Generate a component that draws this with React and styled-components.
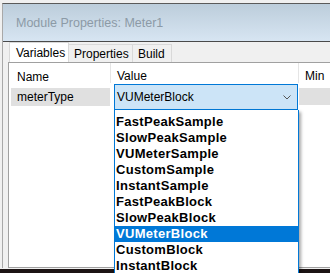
import React from "react";
import styled, { createGlobalStyle } from "styled-components";

const GlobalStyle = createGlobalStyle`
  html, body {
    margin: 0;
    padding: 0;
    background: #f0f0f0;
    overflow: hidden;
  }
  body {
    font-family: "Segoe UI", "Liberation Sans", Arial, sans-serif;
    font-size: 12px;
    color: #000;
  }
`;

const options = [
  "FastPeakSample",
  "SlowPeakSample",
  "VUMeterSample",
  "CustomSample",
  "InstantSample",
  "FastPeakBlock",
  "SlowPeakBlock",
  "VUMeterBlock",
  "CustomBlock",
  "InstantBlock",
];

const tabs = [
  { label: "Variables", width: 60, active: true },
  { label: "Properties", width: 65 },
  { label: "Build", width: 40 },
];

const Page = styled.div`
  height: 273px;
  display: flex;
  flex-direction: column;
`;

const Window = styled.div`
  flex: 1;
  margin: 3px 0 0 2px;
  border-top: 1px solid #5a5a5a;
  border-left: 1px solid #a8a8a8;
  display: flex;
  flex-direction: column;
  min-height: 0;
`;

const TitleBar = styled.div`
  height: 38px;
  flex-shrink: 0;
  box-sizing: border-box;
  display: flex;
  align-items: center;
  padding: 1px 0 0 13px;
  background: linear-gradient(#bccddb, #d7e5f2);
  border-bottom: 1px solid #4a4a4a;
  color: #8c9aa6;
  font-size: 12.5px;
`;

const Body = styled.div`
  flex: 1;
  display: flex;
  flex-direction: column;
  padding-left: 5px;
  background: #f0f0f0;
  min-height: 0;
`;

const TabStrip = styled.div`
  height: 20px;
  flex-shrink: 0;
  display: flex;
  align-items: flex-end;
  padding-left: 2px;
`;

const Tab = styled.div`
  box-sizing: border-box;
  width: ${(p) => p.$width}px;
  height: ${(p) => (p.$active ? 20 : 18)}px;
  padding-left: ${(p) => (p.$active ? 6 : 5)}px;
  display: flex;
  align-items: center;
  background: ${(p) => (p.$active ? "#ffffff" : "#f0f0f0")};
  border: 1px solid #d9d9d9;
  border-bottom: none;
  margin-left: -1px;
  font-size: 12px;
`;

const Panel = styled.div`
  flex: 1;
  background: #fff;
  border-top: 1px solid #a0a0a0;
  border-left: 1px solid #a0a0a0;
  border-bottom: 1px solid #a0a0a0;
  min-height: 0;
`;

const Grid = styled.div`
  display: grid;
  grid-template-columns: 101px 188px 1fr;
  grid-template-rows: 21px 26px;
`;

const HeadCell = styled.div`
  display: flex;
  align-items: flex-end;
  padding-left: ${(p) => p.$pad}px;
  border-left: ${(p) => (p.$sep ? "1px solid #e5e5e5" : "none")};
  margin-bottom: ${(p) => (p.$sep ? 1 : 0)}px;
`;

const NameCell = styled.div`
  margin: 4px 0 4px 2px;
  padding-left: 6px;
  display: flex;
  align-items: center;
  background: #e0e0e0;
`;

const MinCell = styled.div`
  margin: 4px 0 5px 1px;
  background: #e0e0e0;
`;

const ComboCell = styled.div`
  position: relative;
  padding-left: 4px;
`;

const Combo = styled.div`
  box-sizing: border-box;
  height: 26px;
  display: flex;
  align-items: center;
  justify-content: space-between;
  padding: 0 6px 0 2px;
  background: #cce4f7;
  border: 1px solid #0078d7;
`;

const Chevron = styled.svg`
  display: block;
`;

const List = styled.div`
  position: absolute;
  top: 26px;
  left: 4px;
  width: 185px;
  box-sizing: border-box;
  padding-top: 4px;
  background: #fff;
  border: 1px solid #0078d7;
  border-top: none;
  box-shadow: 2px 2px 3px rgba(0, 0, 0, 0.35);
  z-index: 2;
`;

const Option = styled.div`
  height: 16px;
  line-height: 16px;
  padding-left: 1px;
  font-family: "Liberation Sans", Arial, sans-serif;
  font-weight: 700;
  font-size: 13px;
  letter-spacing: 0.3px;
  background: ${(p) => (p.$selected ? "#0078d7" : "transparent")};
  color: ${(p) => (p.$selected ? "#fff" : "#000")};
`;

const Desktop = styled.div`
  height: 4px;
  flex-shrink: 0;
  margin-top: 1px;
  background: #1c1414;
`;

const App = () => {
  const selected = "VUMeterBlock";
  return (
    <>
      <GlobalStyle />
      <Page>
        <Window>
          <TitleBar>Module Properties: Meter1</TitleBar>
          <Body>
            <TabStrip>
              {tabs.map((t) => (
                <Tab key={t.label} $active={t.active} $width={t.width}>
                  {t.label}
                </Tab>
              ))}
            </TabStrip>
            <Panel>
              <Grid>
                <HeadCell $pad={8}>Name</HeadCell>
                <HeadCell $pad={6} $sep>
                  Value
                </HeadCell>
                <HeadCell $pad={6} $sep>
                  Min
                </HeadCell>

                <NameCell>meterType</NameCell>
                <ComboCell>
                  <Combo>
                    <span>{selected}</span>
                    <Chevron viewBox="0 0 8 5" width="8" height="5">
                      <path d="M0.5 0.5 L4 4 L7.5 0.5" fill="none" stroke="#555" strokeWidth="1" />
                    </Chevron>
                  </Combo>
                  <List>
                    {options.map((o) => (
                      <Option key={o} $selected={o === selected}>
                        {o}
                      </Option>
                    ))}
                  </List>
                </ComboCell>
                <MinCell />
              </Grid>
            </Panel>
          </Body>
        </Window>
        <Desktop />
      </Page>
    </>
  );
};

export default App;
